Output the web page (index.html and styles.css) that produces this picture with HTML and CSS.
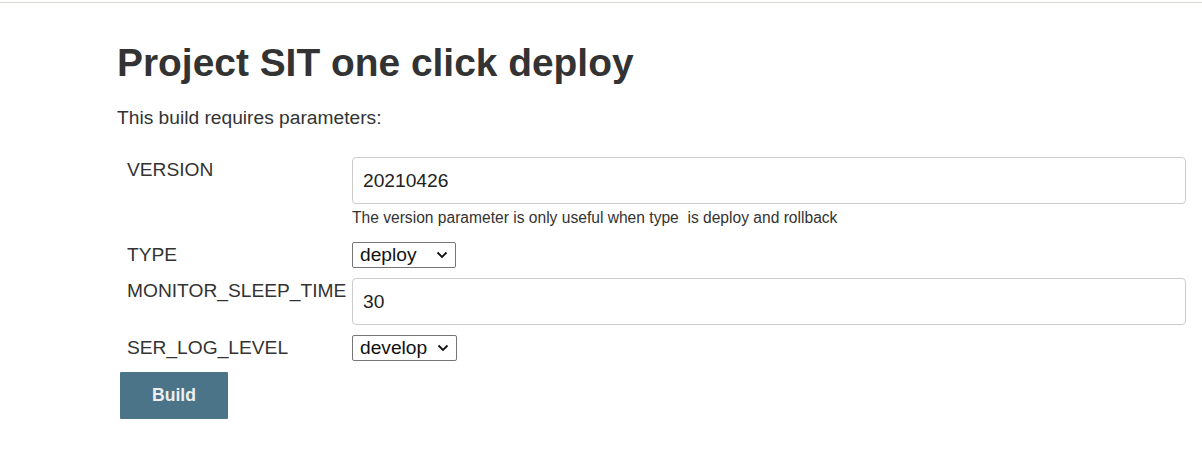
FILE: index.html
```html
<!DOCTYPE html>
<html>
<head>
<meta charset="utf-8">
<title>Project SIT one click deploy</title>
<link rel="stylesheet" href="styles.css">
</head>
<body>
<div class="topline"></div>
<main class="main">
  <h1 class="title">Project SIT one click deploy</h1>
  <p class="intro">This build requires parameters:</p>
  <form class="params">
    <div class="label">VERSION</div>
    <div class="field">
      <input class="text-input" type="text" value="20210426">
      <div class="help">The version parameter is only useful when type&nbsp; is deploy and rollback</div>
    </div>

    <div class="label label-select">TYPE</div>
    <div class="field">
      <span class="select-wrap">
        <select class="select select-type"><option>deploy</option><option>rollback</option></select>
        <svg class="chev" width="12" height="8" viewBox="0 0 12 8"><path d="M1.5 1.5 L6 6 L10.5 1.5" fill="none" stroke="#111" stroke-width="1.8"/></svg>
      </span>
    </div>

    <div class="label">MONITOR_SLEEP_TIME</div>
    <div class="field">
      <input class="text-input" type="text" value="30">
    </div>

    <div class="label label-select">SER_LOG_LEVEL</div>
    <div class="field">
      <span class="select-wrap">
        <select class="select select-log"><option>develop</option><option>info</option></select>
        <svg class="chev" width="12" height="8" viewBox="0 0 12 8"><path d="M1.5 1.5 L6 6 L10.5 1.5" fill="none" stroke="#111" stroke-width="1.8"/></svg>
      </span>
    </div>
  </form>
  <button class="build" type="button">Build</button>
</main>
</body>
</html>
```

FILE: styles.css
```css
html, body {
  margin: 0;
  padding: 0;
  background: #fff;
}
body {
  font-family: "Liberation Sans", Arial, sans-serif;
  color: #333;
}
.topline {
  height: 2px;
  border-bottom: 1px solid #d9dbd2;
}
.main {
  padding: 38px 16px 0 117px;
}
.title {
  margin: 0;
  font-size: 38.9px;
  font-weight: bold;
  line-height: 44px;
  color: #333;
}
.intro {
  margin: 22px 0 0 0;
  font-size: 19.2px;
  line-height: 22px;
}
.params {
  margin-top: 28px;
  display: grid;
  grid-template-columns: 235px 1fr;
  row-gap: 10px;
}
.label {
  padding: 2px 0 0 10px;
  font-size: 19.2px;
  line-height: 22px;
  color: #333;
  white-space: nowrap;
}
.label-select {
  padding-top: 2px;
}
.field {
  display: flex;
  flex-direction: column;
  align-items: flex-start;
}
.text-input {
  box-sizing: border-box;
  width: 100%;
  height: 47px;
  margin: 0;
  padding: 0 10px;
  border: 1px solid #ccc;
  border-radius: 4px;
  font-family: "Liberation Sans", Arial, sans-serif;
  font-size: 19.2px;
  color: #222;
  background: #fff;
  outline: none;
}
.help {
  margin-top: 5px;
  margin-bottom: 5px;
  font-size: 15.6px;
  line-height: 18px;
  color: #333;
}
.select-wrap {
  position: relative;
  display: inline-block;
  height: 26px;
}
.select {
  -webkit-appearance: none;
  appearance: none;
  box-sizing: border-box;
  display: block;
  height: 26px;
  margin: 0;
  padding: 0 0 0 7px;
  border: 1px solid #767676;
  border-radius: 2px;
  background: #fff;
  font-family: "Liberation Sans", Arial, sans-serif;
  font-size: 19.2px;
  line-height: 24px;
  color: #111;
}
.select-type {
  width: 104px;
}
.select-log {
  width: 105px;
}
.chev {
  position: absolute;
  right: 8px;
  top: 9px;
  pointer-events: none;
}
.build {
  display: block;
  margin: 11px 0 0 3px;
  width: 108px;
  height: 47px;
  border: none;
  border-radius: 1px;
  background: #4b7489;
  color: #eeeeee;
  font-family: "Liberation Sans", Arial, sans-serif;
  font-size: 17.6px;
  font-weight: bold;
  cursor: pointer;
}
```
